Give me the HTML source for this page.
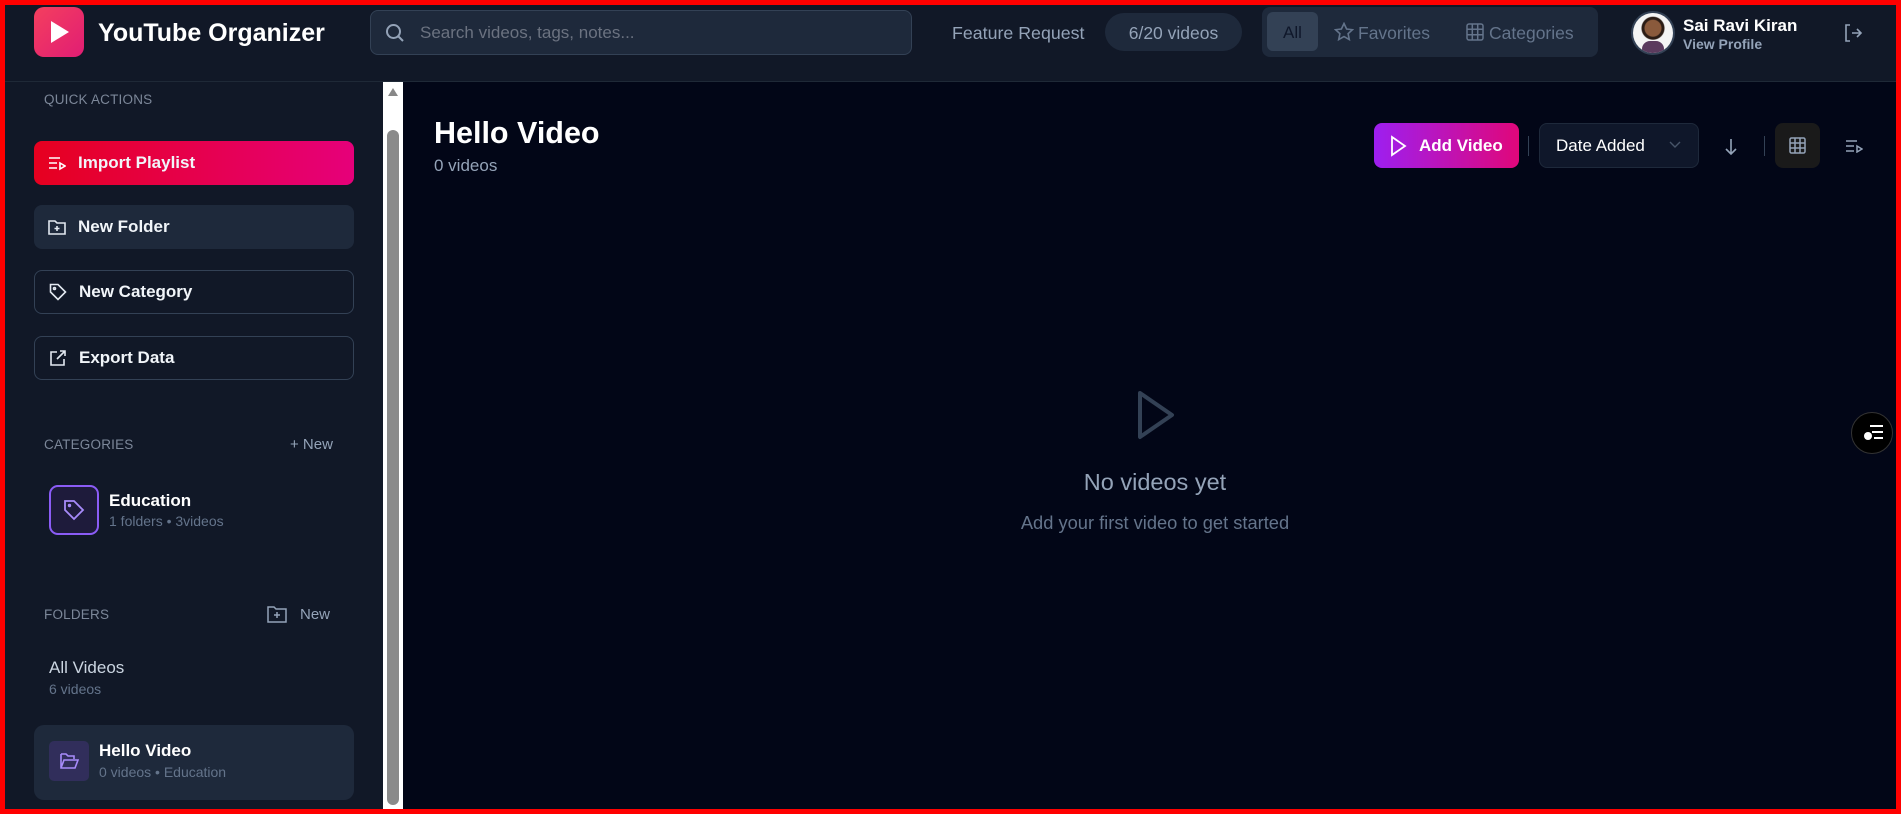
<!DOCTYPE html>
<html><head><meta charset="utf-8"><style>
*{box-sizing:border-box;margin:0;padding:0}
body{width:1901px;height:814px;overflow:hidden;background:#ff0000;font-family:"Liberation Sans",sans-serif;position:relative}
.abs{position:absolute}
#frame{position:absolute;left:5px;top:5px;width:1891px;height:804px;background:#020617;overflow:hidden}
#hdr{position:absolute;left:0;top:0;width:1891px;height:77px;background:#111827;border-bottom:1px solid #1f2937}
#side{position:absolute;left:0;top:77px;width:378px;height:727px;background:#111827}
#scroll{position:absolute;left:378px;top:77px;width:20px;height:727px;background:#fff}
.btn{position:absolute;left:29px;width:320px;height:44px;border-radius:8px;display:flex;align-items:center;padding-left:14px;color:#f1f5f9;font-size:17px;font-weight:bold}
.btn svg{margin-right:12px}
.lbl{position:absolute;font-size:13.5px;color:#7c8799;letter-spacing:.2px}
</style></head><body>
<div id="frame">
<div id="hdr">
 <div class="abs" style="left:29px;top:2px;width:50px;height:50px;border-radius:10px;background:linear-gradient(135deg,#f43f5e,#e11d74)"></div>
 <svg class="abs" style="left:44px;top:15px" width="22" height="24"><path d="M2 1 L20 12 L2 23 Z" fill="#fff"/></svg>
 <div class="abs" style="left:93px;top:14px;font-size:25px;font-weight:bold;color:#fff">YouTube Organizer</div>
 <div class="abs" style="left:365px;top:5px;width:542px;height:45px;border:1px solid #334155;border-radius:8px;background:#1e293b"></div>
 <svg class="abs" style="left:380px;top:18px" width="20" height="20" fill="none" stroke="#94a3b8" stroke-width="2"><circle cx="8.5" cy="8.5" r="6.5"/><path d="M13.5 13.5 L18 18"/></svg>
 <div class="abs" style="left:415px;top:18px;font-size:17px;color:#6b7280">Search videos, tags, notes...</div>
 <div class="abs" style="left:947px;top:18px;font-size:17.8px;color:#94a3b8">Feature Request</div>
 <div class="abs" style="left:1100px;top:8px;width:137px;height:38px;border-radius:19px;background:#1e293b;color:#94a3b8;font-size:17.5px;text-align:center;line-height:40px">6/20 videos</div>
 <div class="abs" style="left:1257px;top:2px;width:336px;height:50px;border-radius:8px;background:#1e293b"></div>
 <div class="abs" style="left:1262px;top:7px;width:51px;height:39px;border-radius:6px;background:#334155;color:#0f172a;font-size:17px;text-align:center;line-height:41px">All</div>
 <svg class="abs" style="left:1329px;top:17px" width="20" height="20" fill="none" stroke="#64748b" stroke-width="1.6"><path d="M10 1.5 L12.6 7 L18.5 7.7 L14.1 11.7 L15.3 17.6 L10 14.6 L4.7 17.6 L5.9 11.7 L1.5 7.7 L7.4 7 Z"/></svg>
 <div class="abs" style="left:1353px;top:18px;font-size:17.5px;color:#64748b">Favorites</div>
 <svg class="abs" style="left:1461px;top:18px" width="18" height="18" fill="none" stroke="#64748b" stroke-width="1.5"><rect x="1" y="1" width="16" height="16" rx="2"/><path d="M1 6.3H17M1 11.7H17M6.3 1V17M11.7 1V17"/></svg>
 <div class="abs" style="left:1484px;top:18px;font-size:17.5px;color:#64748b">Categories</div>
 <div class="abs" style="left:1626px;top:6px;width:44px;height:44px;border-radius:50%;background:#334155;padding:2px"><div style="width:40px;height:40px;border-radius:50%;background:radial-gradient(circle at 50% 38%,#8a5a3c 0 8px,#2b1c15 9px 11px,#f4f4f4 12px);overflow:hidden;position:relative"><div style="position:absolute;left:9px;top:28px;width:22px;height:14px;background:#5b3b5e;border-radius:8px 8px 0 0"></div></div></div>
 <div class="abs" style="left:1678px;top:11px;font-size:17px;font-weight:bold;color:#fff">Sai Ravi Kiran</div>
 <div class="abs" style="left:1678px;top:31px;font-size:14px;font-weight:bold;color:#94a3b8">View Profile</div>
 <svg class="abs" style="left:1838px;top:18px" width="20" height="20" fill="none" stroke="#94a3b8" stroke-width="1.6"><path d="M7 2H3V18H7M9 10H18M14 6L18 10L14 14"/></svg>
</div>
<div id="side">
 <div class="lbl" style="left:39px;top:10px">QUICK ACTIONS</div>
 <div class="btn" style="top:59px;background:linear-gradient(90deg,#e6001f,#e6007a)"><svg width="18" height="16" fill="none" stroke="#fff" stroke-width="1.6"><path d="M1 3H12M1 8H9M1 13H9M12 8L17 11L12 14Z"/></svg>Import Playlist</div>
 <div class="btn" style="top:123px;background:#1e293b"><svg width="18" height="18" fill="none" stroke="#e2e8f0" stroke-width="1.6"><path d="M1 3H7L9 5H17V16H1Z M9 8V13 M6.5 10.5H11.5"/></svg>New Folder</div>
 <div class="btn" style="top:188px;border:1px solid #334155;font-weight:normal"><svg width="18" height="18" fill="none" stroke="#e2e8f0" stroke-width="1.6"><path d="M1.5 1.5H9L16.5 9L9 16.5L1.5 9Z"/><circle cx="5.5" cy="5.5" r="1"/></svg><b>New Category</b></div>
 <div class="btn" style="top:254px;border:1px solid #334155"><svg width="18" height="18" fill="none" stroke="#e2e8f0" stroke-width="1.6"><path d="M8 3H2V16H15V10M11 2H16V7M16 2L8 10"/></svg>Export Data</div>
 <div class="lbl" style="left:39px;top:355px">CATEGORIES</div>
 <div class="abs" style="left:285px;top:354px;font-size:15px;color:#94a3b8">+ New</div>
 <div class="abs" style="left:44px;top:403px;width:50px;height:50px;border-radius:9px;border:2px solid #8b5cf6;background:#1e1b3b"></div>
 <svg class="abs" style="left:57px;top:416px" width="24" height="24" fill="none" stroke="#a78bfa" stroke-width="1.8"><path d="M3 3H12L21 12L12 21L3 12Z"/><circle cx="7.5" cy="7.5" r="0.8"/></svg>
 <div class="abs" style="left:104px;top:409px;font-size:17px;font-weight:bold;color:#fff">Education</div>
 <div class="abs" style="left:104px;top:431px;font-size:14px;color:#64748b">1 folders • 3videos</div>
 <div class="lbl" style="left:39px;top:525px">FOLDERS</div>
 <svg class="abs" style="left:262px;top:523px" width="20" height="18" fill="none" stroke="#94a3b8" stroke-width="1.5"><path d="M1 2H7L9 4H19V17H1Z M10 7V13 M7 10H13"/></svg>
 <div class="abs" style="left:295px;top:524px;font-size:15px;color:#94a3b8">New</div>
 <div class="abs" style="left:44px;top:576px;font-size:17px;color:#cbd5e1">All Videos</div>
 <div class="abs" style="left:44px;top:599px;font-size:14px;color:#64748b">6 videos</div>
 <div class="abs" style="left:29px;top:643px;width:320px;height:75px;border-radius:10px;background:#1e293b"></div>
 <div class="abs" style="left:44px;top:659px;width:40px;height:40px;border-radius:5px;background:#312e5b"></div>
 <svg class="abs" style="left:55px;top:670px" width="19" height="18" fill="none" stroke="#a78bfa" stroke-width="1.6"><path d="M1 2H6L8 4H14V7M1 2V16H15L18 8H4L1 16"/></svg>
 <div class="abs" style="left:94px;top:659px;font-size:17px;font-weight:bold;color:#fff">Hello Video</div>
 <div class="abs" style="left:94px;top:682px;font-size:14px;color:#64748b">0 videos • Education</div>
</div>
<div id="scroll"><div class="abs" style="left:5px;top:6px;width:0;height:0;border-left:5px solid transparent;border-right:5px solid transparent;border-bottom:8px solid #888"></div><div class="abs" style="left:4px;top:48px;width:12px;height:675px;border-radius:6px;background:#8a8a8a"></div></div>
<div class="abs" style="left:429px;top:111px;font-size:30.5px;font-weight:bold;color:#fff">Hello Video</div>
<div class="abs" style="left:429px;top:151px;font-size:17px;color:#94a3b8">0 videos</div>
<div class="abs" style="left:1369px;top:118px;width:145px;height:45px;border-radius:8px;background:linear-gradient(90deg,#9d1ff0,#e0077a);color:#fff;font-size:17px;font-weight:bold;line-height:45px;padding-left:45px">Add Video</div>
<svg class="abs" style="left:1384px;top:130px" width="18" height="22" fill="none" stroke="#fff" stroke-width="1.8"><path d="M3 2L16 11L3 20Z"/></svg>
<div class="abs" style="left:1523px;top:131px;width:1px;height:20px;background:#334155"></div>
<div class="abs" style="left:1534px;top:118px;width:160px;height:45px;border-radius:8px;border:1px solid #1e293b;background:#0f172a;color:#fff;font-size:17px;line-height:43px;padding-left:16px">Date Added</div>
<svg class="abs" style="left:1664px;top:136px" width="12" height="8" fill="none" stroke="#475569" stroke-width="1.4"><path d="M1 1L6 6L11 1"/></svg>
<svg class="abs" style="left:1719px;top:133px" width="14" height="18" fill="none" stroke="#94a3b8" stroke-width="1.6"><path d="M7 1V16M2 11L7 16L12 11"/></svg>
<div class="abs" style="left:1759px;top:131px;width:1px;height:20px;background:#334155"></div>
<div class="abs" style="left:1770px;top:118px;width:45px;height:45px;border-radius:8px;background:#1a1a1a"></div>
<svg class="abs" style="left:1784px;top:132px" width="17" height="17" fill="none" stroke="#94a3b8" stroke-width="1.5"><rect x="1" y="1" width="15" height="15" rx="1.5"/><path d="M1 6H16M1 11H16M6 1V16M11 1V16"/></svg>
<svg class="abs" style="left:1840px;top:134px" width="18" height="14" fill="none" stroke="#94a3b8" stroke-width="1.5"><path d="M1 2H12M1 7H9M1 12H9M12 7L17 10L12 13Z"/></svg>
<svg class="abs" style="left:1127px;top:382px" width="46" height="56" fill="none" stroke="#334155" stroke-width="4" stroke-linejoin="round"><path d="M8 6L40 28L8 50Z"/></svg>
<div class="abs" style="left:900px;top:464px;width:500px;text-align:center;font-size:23.5px;color:#94a3b8">No videos yet</div>
<div class="abs" style="left:900px;top:507px;width:500px;text-align:center;font-size:18.3px;color:#64748b">Add your first video to get started</div>
<div class="abs" style="left:1846px;top:407px;width:42px;height:42px;border-radius:50%;background:#000;border:1px solid #333"></div>
<svg class="abs" style="left:1858px;top:419px" width="22" height="18" fill="none" stroke="#fff" stroke-width="2"><path d="M7 2H20M9 8H20M11 14H20"/><circle cx="5" cy="12" r="4" fill="#fff" stroke="none"/></svg>
</div>
</body></html>
